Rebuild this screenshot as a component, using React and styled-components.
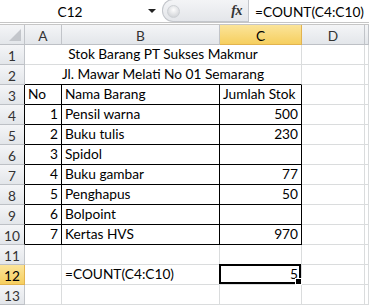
import React from "react";
import styled, { createGlobalStyle, css } from "styled-components";

const Global = createGlobalStyle`
  html, body { margin: 0; padding: 0; background: #fff; }
  body { font-family: Lato, "Open Sans", sans-serif; overflow: hidden; }
`;

const Sheet = styled.div`
  width: 369px;
  height: 305px;
  overflow: hidden;
  display: flex;
  flex-direction: column;
  background: #fff;
`;

const FormulaBar = styled.div`
  height: 22px;
  display: flex;
  border-bottom: 1px solid #c6c6c6;
  background: #fff;
`;

const NameBox = styled.div`
  width: 140px;
  display: flex;
  align-items: center;
  justify-content: center;
  font-size: 13.7px;
  color: #000;
`;

const DropArea = styled.div`
  width: 20px;
  display: flex;
  align-items: center;
  justify-content: center;
  padding-left: 2px;
`;

const Arrow = styled.div`
  width: 0;
  height: 0;
  border-left: 4px solid transparent;
  border-right: 4px solid transparent;
  border-top: 4px solid #222;
`;

const FxArea = styled.div`
  width: 86px;
  position: relative;
  display: flex;
  align-items: center;
  justify-content: flex-end;
  padding-right: 6px;
  box-sizing: border-box;
  background: linear-gradient(#f3f4f6, #e4e6ea);
  border-radius: 11px 0 0 11px;
  border: 1px solid #c3c6cb;
  border-right: none;
  margin-top: -1px;
  height: 23px;
`;

const Knob = styled.div`
  position: absolute;
  left: 4px;
  top: 5px;
  width: 11px;
  height: 11px;
  border-radius: 50%;
  background: radial-gradient(circle at 50% 35%, #fdfdfd, #c7cacf);
  border: 1px solid #cdd0d4;
`;

const Fx = styled.span`
  font-family: "Liberation Serif", "DejaVu Serif", serif;
  font-style: italic;
  font-weight: bold;
  font-size: 14px;
  color: #333;
  letter-spacing: -0.5px;
`;

const FormulaText = styled.div`
  flex: 1;
  display: flex;
  align-items: center;
  padding-left: 6px;
  border-left: 1px solid #c3c6cb;
  font-size: 13.7px;
  color: #000;
`;

const Splitter = styled.div`
  height: 3px;
  border-bottom: 1px solid #c6c6c6;
  background: #fff;
`;

const Grid = styled.div`
  display: grid;
  grid-template-columns: 25px 37px 158px 82px 63px 1fr;
  grid-auto-rows: 20px;
`;

const Head = styled.div`
  box-sizing: border-box;
  display: flex;
  align-items: center;
  justify-content: center;
  font-size: 13.7px;
  color: #333;
  background: linear-gradient(#f4f5f7, #e3e6ea);
  border-right: 1px solid ${(p) => (p.$dark ? "#000" : "#c1c4c9")};
  border-bottom: 1px solid #bdc0c5;
  padding-top: 1px;
  ${(p) =>
    p.$active &&
    css`
      background: linear-gradient(#fbe49a, #f6cf5f);
      color: #000;
      border-right-color: #e2b34f;
      border-bottom-color: #e2b34f;
    `}
`;

const Corner = styled(Head)`
  position: relative;
`;

const CornerTri = styled.div`
  position: absolute;
  right: 3px;
  bottom: 3px;
  width: 0;
  height: 0;
  border-left: 12px solid transparent;
  border-bottom: 12px solid #c3c6cb;
`;

const Cell = styled.div`
  box-sizing: border-box;
  position: relative;
  display: flex;
  align-items: flex-end;
  justify-content: ${(p) =>
    p.$align === "right" ? "flex-end" : p.$align === "center" ? "center" : "flex-start"};
  padding: 0 ${(p) => (p.$align === "right" ? "3px" : "0")} 1px
    ${(p) => (p.$align === "left" ? "3px" : "0")};
  font-size: 13.7px;
  line-height: 18px;
  color: #000;
  white-space: nowrap;
  grid-column: span ${(p) => p.$span || 1};
  border-right: 1px solid ${(p) => (p.$boxR ? "#000" : "#dadcdd")};
  border-bottom: 1px solid ${(p) => (p.$boxB ? "#000" : "#dadcdd")};
`;

const Selection = styled.div`
  position: absolute;
  top: -1px;
  left: -1px;
  right: 0;
  bottom: 0;
  border: 2px solid #000;
  pointer-events: none;
`;

const Handle = styled.div`
  position: absolute;
  right: -3px;
  bottom: -3px;
  width: 5px;
  height: 5px;
  background: #000;
  border: 1px solid #fff;
`;

const items = [
  [1, "Pensil warna", "500"],
  [2, "Buku tulis", "230"],
  [3, "Spidol", ""],
  [4, "Buku gambar", "77"],
  [5, "Penghapus", "50"],
  [6, "Bolpoint", ""],
  [7, "Kertas HVS", "970"],
];

export default function App() {
  return (
    <Sheet>
      <Global />
      <FormulaBar>
        <NameBox>C12</NameBox>
        <DropArea>
          <Arrow />
        </DropArea>
        <FxArea>
          <Knob />
          <Fx>fx</Fx>
        </FxArea>
        <FormulaText>=COUNT(C4:C10)</FormulaText>
      </FormulaBar>
      <Splitter />
      <Grid>
        <Corner>
          <CornerTri />
        </Corner>
        <Head>A</Head>
        <Head>B</Head>
        <Head $active>C</Head>
        <Head>D</Head>
        <Head />

        <Head>1</Head>
        <Cell $span={3} $align="center">Stok Barang PT Sukses Makmur</Cell>
        <Cell />
        <Cell />

        <Head>2</Head>
        <Cell $span={3} $align="center" $boxB>
          Jl. Mawar Melati No 01 Semarang
        </Cell>
        <Cell />
        <Cell />

        <Head $dark>3</Head>
        <Cell $align="left" $boxR $boxB>No</Cell>
        <Cell $align="left" $boxR $boxB>Nama Barang</Cell>
        <Cell $align="left" $boxR $boxB>Jumlah Stok</Cell>
        <Cell />
        <Cell />

        {items.map(([no, name, qty], i) => (
          <React.Fragment key={no}>
            <Head $dark>{i + 4}</Head>
            <Cell $align="right" $boxR $boxB>{no}</Cell>
            <Cell $align="left" $boxR $boxB>{name}</Cell>
            <Cell $align="right" $boxR $boxB>{qty}</Cell>
            <Cell />
            <Cell />
          </React.Fragment>
        ))}

        <Head>11</Head>
        <Cell />
        <Cell />
        <Cell />
        <Cell />
        <Cell />

        <Head $active>12</Head>
        <Cell />
        <Cell $align="left">=COUNT(C4:C10)</Cell>
        <Cell $align="right">
          5
          <Selection>
            <Handle />
          </Selection>
        </Cell>
        <Cell />
        <Cell />

        <Head>13</Head>
        <Cell />
        <Cell />
        <Cell />
        <Cell />
        <Cell />
      </Grid>
    </Sheet>
  );
}
